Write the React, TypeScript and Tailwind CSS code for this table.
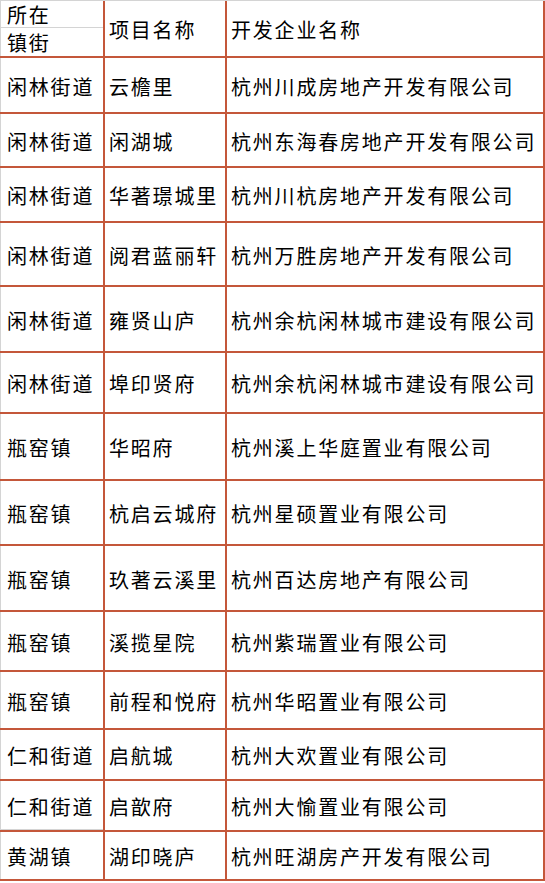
import React from "react";

const rows: { h: number; a: string; b: string; c: string; grayLine?: boolean }[] = [
  { h: 56, a: "闲林街道", b: "云檐里", c: "杭州川成房地产开发有限公司" },
  { h: 54, a: "闲林街道", b: "闲湖城", c: "杭州东海春房地产开发有限公司" },
  { h: 55, a: "闲林街道", b: "华著璟城里", c: "杭州川杭房地产开发有限公司" },
  { h: 64, a: "闲林街道", b: "阅君蓝丽轩", c: "杭州万胜房地产开发有限公司" },
  { h: 66, a: "闲林街道", b: "雍贤山庐", c: "杭州余杭闲林城市建设有限公司" },
  { h: 61, a: "闲林街道", b: "埠印贤府", c: "杭州余杭闲林城市建设有限公司" },
  { h: 67, a: "瓶窑镇", b: "华昭府", c: "杭州溪上华庭置业有限公司" },
  { h: 65, a: "瓶窑镇", b: "杭启云城府", c: "杭州星硕置业有限公司" },
  { h: 66, a: "瓶窑镇", b: "玖著云溪里", c: "杭州百达房地产有限公司" },
  { h: 60, a: "瓶窑镇", b: "溪揽星院", c: "杭州紫瑞置业有限公司" },
  { h: 58, a: "瓶窑镇", b: "前程和悦府", c: "杭州华昭置业有限公司" },
  { h: 51, a: "仁和街道", b: "启航城", c: "杭州大欢置业有限公司" },
  { h: 51, a: "仁和街道", b: "启歆府", c: "杭州大愉置业有限公司", grayLine: true },
  { h: 49, a: "黄湖镇", b: "湖印晓庐", c: "杭州旺湖房产开发有限公司" },
];

const font = {
  fontFamily: '"Noto Sans CJK SC", "Noto Sans", sans-serif',
};

export default function App() {
  return (
    <div
      className="w-[545px] h-[883px] bg-white text-black text-[20px] leading-none tracking-[1.8px]"
      style={font}
    >
      {/* Header */}
      <div className="flex h-[58px] border-t border-t-[#d4d4d4] border-b-2 border-b-[#c4573a]">
        <div className="w-[103px] border-l border-l-[#d4d4d4] flex flex-col">
          <div className="h-[27px] border-b border-b-[#d4d4d4] flex items-center pl-[6px] pt-[2px]">所在</div>
          <div className="flex-1 flex items-center pl-[6px] pt-[2px]">镇街</div>
        </div>
        <div className="w-[122px] border-l-2 border-l-[#c4573a] flex items-center pl-[4px] pt-[2px]">项目名称</div>
        <div className="w-[320px] border-l-2 border-l-[#c4573a] border-r-2 border-r-[#c4573a] flex items-center pl-[4px] pt-[2px]">
          开发企业名称
        </div>
      </div>
      {rows.map((r, i) => (
        <div
          key={i}
          className="flex border-b-2 border-b-[#c4573a]"
          style={{ height: r.h }}
        >
          <div className="w-[103px] border-l border-l-[#d4d4d4] flex flex-col">
            <div className="flex-1 flex items-center pl-[6px] pt-[3px]">{r.a}</div>
            {r.grayLine ? <div className="h-px bg-[#d4d4d4]" /> : null}
          </div>
          <div className="w-[122px] border-l-2 border-l-[#c4573a] flex items-center pl-[4px] pt-[3px]">{r.b}</div>
          <div className="w-[320px] border-l-2 border-l-[#c4573a] border-r-2 border-r-[#c4573a] flex items-center pl-[4px] pt-[3px] whitespace-nowrap">
            {r.c}
          </div>
        </div>
      ))}
    </div>
  );
}
